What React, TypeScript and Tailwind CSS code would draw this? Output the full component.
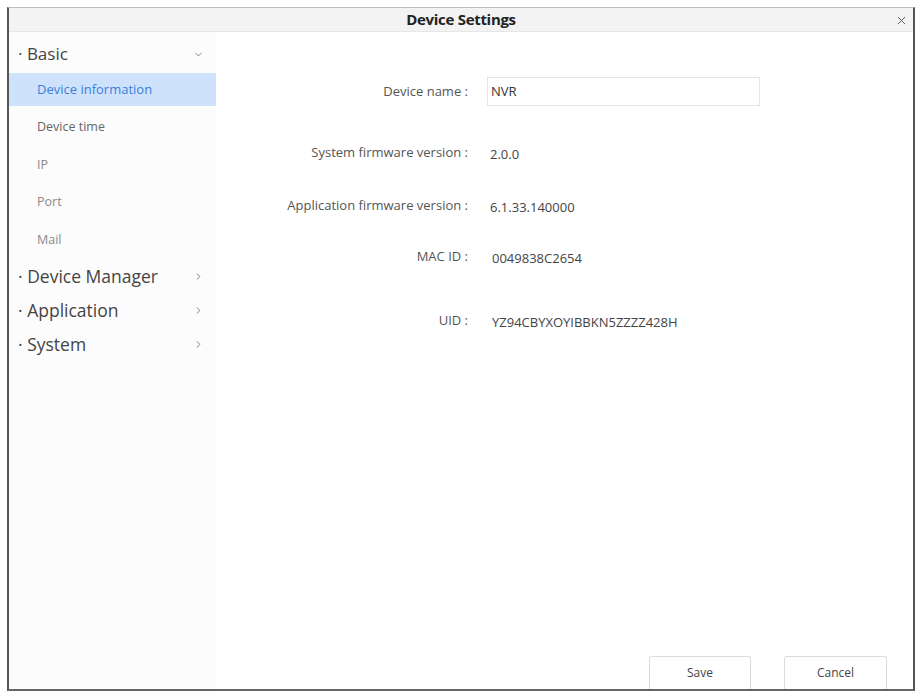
import { ChevronDown, ChevronRight, X } from "lucide-react";

const subItems = ["Device information", "Device time", "IP", "Port", "Mail"];
const groups = ["Device Manager", "Application", "System"];

function Row({ label, mt, children }: { label: string; mt: string; children: React.ReactNode }) {
  return (
    <div className={`flex h-[29px] items-center ${mt}`}>
      <div className="w-[253px] pr-[1px] text-right text-[13px] text-[#555]">{label}</div>
      <div className="ml-[18px] flex-1">{children}</div>
    </div>
  );
}

export default function App() {
  return (
    <div className="h-[693px] w-[918px] bg-white pl-[7px] pt-[7px] font-['Open_Sans',sans-serif]">
      <div className="flex h-[684px] w-[908px] flex-col border-t border-[#bdbdbd] border-l-2 border-l-[#555] border-r-2 border-r-[#555] border-b-2 border-b-[#666]">
        {/* title bar */}
        <div className="relative flex h-[24px] items-center justify-center border-b border-[#e6e6e6] bg-[#f3f3f3]">
          <span className="text-[15px] font-bold tracking-[-0.3px] text-[#222]">Device Settings</span>
          <X className="absolute right-[5px] top-[6px] h-[13px] w-[13px] text-[#555]" strokeWidth={1.75} />
        </div>

        <div className="flex flex-1">
          {/* sidebar */}
          <aside className="w-[207px] bg-[#fcfcfc]">
            <div className="mt-[5px] flex h-[34px] items-center justify-between pl-[9px] pr-[12px]">
              <span className="text-[17px] text-[#444]">· Basic</span>
              <ChevronDown className="h-[11px] w-[11px] text-[#777]" strokeWidth={2} />
            </div>
            <div className="mt-[2px] flex h-[33px] items-center bg-[#cfe2fb] pl-[28px] text-[13px] text-[#3b7fd8]">
              {subItems[0]}
            </div>
            <div className="mt-[3px]">
              {subItems.slice(1).map((s, i) => (
                <div
                  key={s}
                  className={`flex h-[37.5px] items-center pl-[28px] text-[12.5px] ${i === 0 ? "text-[#666]" : "text-[#8a8a8a]"}`}
                >
                  {s}
                </div>
              ))}
            </div>
            {groups.map((g) => (
              <div key={g} className="flex h-[34px] items-center justify-between pl-[9px] pr-[12px]">
                <span className="text-[17.5px] text-[#444]">· {g}</span>
                <ChevronRight className="h-[11px] w-[11px] text-[#777]" strokeWidth={2} />
              </div>
            ))}
          </aside>

          {/* content */}
          <main className="flex flex-1 flex-col bg-white">
            <div className="pt-[45px]">
              <Row label="Device name :" mt="mt-0">
                <div className="flex h-[29px] w-[273px] items-center border border-[#e4e4e4] pl-[3px] text-[13px] font-medium text-[#333]">
                  NVR
                </div>
              </Row>
              <Row label="System firmware version :" mt="mt-[32px]">
                <span className="pl-[3px] text-[13px] text-[#444]">2.0.0</span>
              </Row>
              <Row label="Application firmware version :" mt="mt-[24px]">
                <span className="pl-[3px] text-[13px] text-[#444]">6.1.33.140000</span>
              </Row>
              <Row label="MAC ID :" mt="mt-[22px]">
                <span className="pl-[5px] text-[13px] text-[#444]">0049838C2654</span>
              </Row>
              <Row label="UID :" mt="mt-[35px]">
                <span className="pl-[5px] text-[13px] text-[#444]">YZ94CBYXOYIBBKN5ZZZZ428H</span>
              </Row>
            </div>
            <div className="mt-auto flex justify-end gap-[33px] pr-[26px]">
              <button type="button" className="h-[33px] w-[102px] rounded-t-[3px] border border-b-0 border-[#dcdcdc] bg-white text-[12px] text-[#444]">
                Save
              </button>
              <button type="button" className="h-[33px] w-[103px] rounded-t-[3px] border border-b-0 border-[#dcdcdc] bg-white text-[12px] text-[#444]">
                Cancel
              </button>
            </div>
          </main>
        </div>
      </div>
    </div>
  );
}
